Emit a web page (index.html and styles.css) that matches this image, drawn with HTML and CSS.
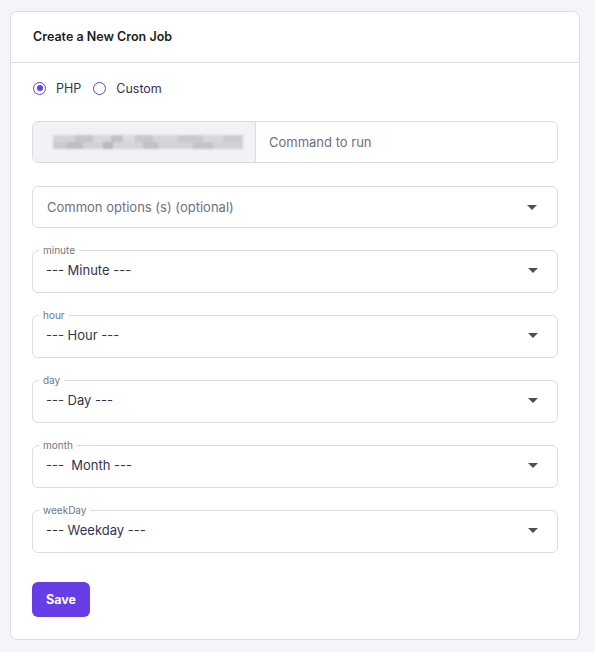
FILE: index.html
```html
<!DOCTYPE html>
<html lang="en">
<head>
    <meta charset="UTF-8">
    <meta name="viewport" content="width=device-width, initial-scale=1.0">
    <title>Create a New Cron Job</title>
    <link rel="stylesheet" href="styles.css">
</head>
<body>
    <div class="card">
        <div class="card-head">Create a New Cron Job</div>
        <div class="card-body">
            <div class="radios">
                <label class="radio"><span class="dot checked"></span>PHP</label>
                <label class="radio"><span class="dot"></span>Custom</label>
            </div>

            <div class="group">
                <div class="prefix"><div class="blurred"></div></div>
                <div class="group-input">Command to run</div>
            </div>

            <div class="select plain">
                <span class="placeholder">Common options (s) (optional)</span>
                <svg class="caret" width="10" height="5" viewBox="0 0 10 5"><path d="M0 0h10L5 5z"/></svg>
            </div>

            <fieldset class="field">
                <legend>minute</legend>
                <div class="select">
                    <span>--- Minute ---</span>
                    <svg class="caret" width="10" height="5" viewBox="0 0 10 5"><path d="M0 0h10L5 5z"/></svg>
                </div>
            </fieldset>

            <fieldset class="field">
                <legend>hour</legend>
                <div class="select">
                    <span>--- Hour ---</span>
                    <svg class="caret" width="10" height="5" viewBox="0 0 10 5"><path d="M0 0h10L5 5z"/></svg>
                </div>
            </fieldset>

            <fieldset class="field">
                <legend>day</legend>
                <div class="select">
                    <span>--- Day ---</span>
                    <svg class="caret" width="10" height="5" viewBox="0 0 10 5"><path d="M0 0h10L5 5z"/></svg>
                </div>
            </fieldset>

            <fieldset class="field">
                <legend>month</legend>
                <div class="select">
                    <span>---&nbsp; Month ---</span>
                    <svg class="caret" width="10" height="5" viewBox="0 0 10 5"><path d="M0 0h10L5 5z"/></svg>
                </div>
            </fieldset>

            <fieldset class="field">
                <legend>weekDay</legend>
                <div class="select">
                    <span>--- Weekday ---</span>
                    <svg class="caret" width="10" height="5" viewBox="0 0 10 5"><path d="M0 0h10L5 5z"/></svg>
                </div>
            </fieldset>

            <button class="save">Save</button>
        </div>
    </div>
</body>
</html>
```

FILE: styles.css
```css
body{
    margin: 0;
    background: #f4f4fb;
    font-family: Inter, "Noto Sans", sans-serif;
    color: #36344d;
}

.card{
    width: 568px;
    margin: 11px 0 0 10px;
    background: #fff;
    border: 1px solid #dadce0;
    border-radius: 7px;
}

.card-head{
    height: 50px;
    line-height: 50px;
    padding: 0 22px;
    font-size: 12.5px;
    font-weight: 600;
    color: #1d1e20;
    border-bottom: 1px solid #dadce0;
}

.card-body{
    padding: 15px 21px 22px;
}

.radios{
    display: flex;
    align-items: center;
    height: 20px;
    font-size: 12.5px;
    color: #36344d;
}

.radio{
    display: flex;
    align-items: center;
    margin-right: 11px;
    padding-left: 1px;
}

.dot{
    width: 11px;
    height: 11px;
    border: 1.5px solid #673de6;
    border-radius: 50%;
    margin-right: 10px;
    position: relative;
}

.dot.checked::after{
    content: "";
    position: absolute;
    left: 2.5px;
    top: 2.5px;
    width: 6px;
    height: 6px;
    border-radius: 50%;
    background: #673de6;
}

.group{
    display: flex;
    height: 40px;
    margin-top: 23px;
    border: 1px solid #dadce0;
    border-radius: 6px;
    overflow: hidden;
}

.prefix{
    width: 223px;
    background: #f2f2f6;
    border-right: 1px solid #dadce0;
    display: flex;
    align-items: center;
    padding-left: 20px;
    box-sizing: border-box;
}

.blurred{
    width: 190px;
    height: 14px;
    filter: blur(1.2px);
    background:
        linear-gradient(90deg, #d4d4d8 0 22px, #c6c6cb 22px 40px, #d8d8dc 40px 58px, #c2c2c6 58px 70px, #dcdce0 70px 82px, #c8c8cc 82px 100px, #d6d6da 100px 125px, #cacace 125px 150px, #d8d8dc 150px 170px, #cdcdd1 170px 190px) top / 100% 7px no-repeat,
        linear-gradient(90deg, #cbcbcf 0 14px, #bdbdc2 14px 30px, #d2d2d6 30px 50px, #b8b8bd 50px 60px, #d5d5d9 60px 90px, #c0c0c5 90px 105px, #d3d3d7 105px 140px, #c4c4c8 140px 160px, #d2d2d6 160px 190px) bottom / 100% 7px no-repeat;
}

.group-input{
    flex: 1;
    display: flex;
    align-items: center;
    padding-left: 13px;
    font-size: 13px;
    color: #6d7081;
}

.select{
    position: relative;
    display: flex;
    align-items: center;
    font-size: 13px;
    color: #36344d;
    padding-left: 14px;
}

.select.plain{
    height: 40px;
    margin-top: 23px;
    border: 1px solid #dadce0;
    border-radius: 6px;
}

.placeholder{
    color: #6d7081;
}

.caret{
    position: absolute;
    right: 20px;
    top: 50%;
    margin-top: -2px;
    fill: #4f4f5a;
}

.field{
    margin: 16px 0 0;
    padding: 0 0 8px;
    min-width: 0;
    border: 1px solid #dadce0;
    border-radius: 6px;
}

.field legend{
    font-size: 10px;
    line-height: 12px;
    color: #727586;
    margin-left: 6px;
    padding: 0 4px;
}

.field .select{
    height: 28px;
    padding-left: 13px;
}

.field .caret{
    right: 19px;
}

.save{
    display: block;
    margin-top: 29px;
    width: 58px;
    height: 35px;
    border: none;
    border-radius: 6px;
    background: #673de6;
    color: #fff;
    font-family: Inter, sans-serif;
    font-size: 12.5px;
    font-weight: 700;
}
```
